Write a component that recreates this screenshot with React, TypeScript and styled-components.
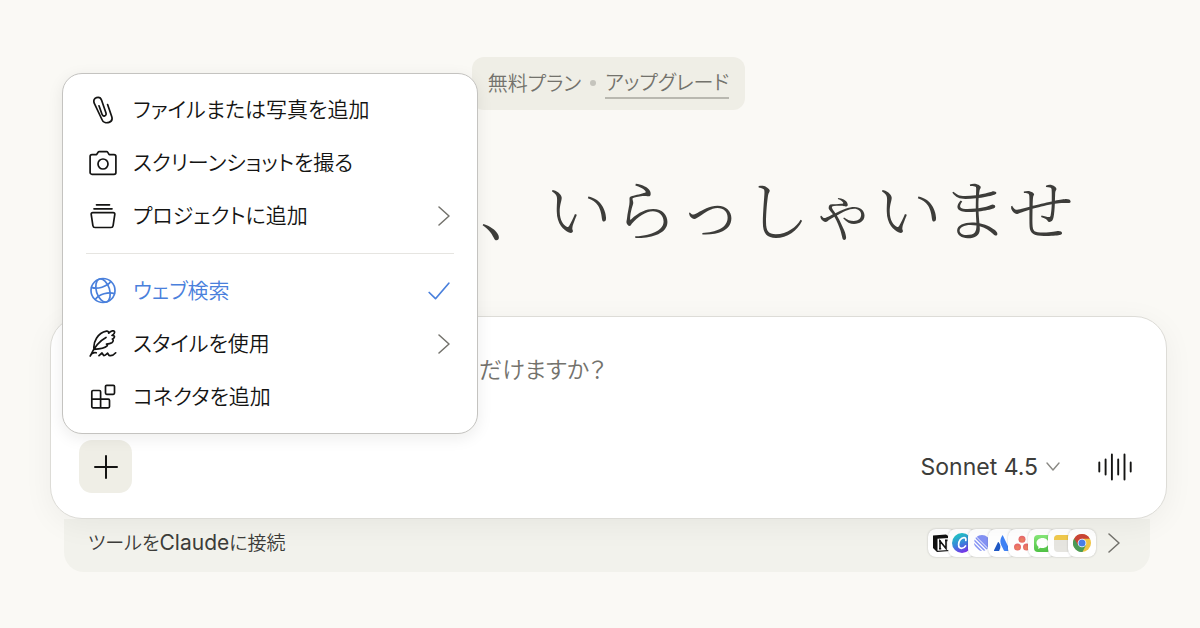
import React from "react";
import styled, { createGlobalStyle } from "styled-components";

const GlobalStyle = createGlobalStyle`
  *, *::before, *::after { box-sizing: border-box; }
  body {
    margin: 0;
    background: #faf9f5;
    color: #141413;
    font-family: "Noto Sans CJK JP", sans-serif;
    font-weight: 350;
    font-feature-settings: "palt";
  }
  button, textarea { font: inherit; font-feature-settings: inherit; color: inherit; }
`;

const Page = styled.main`
  position: relative;
  padding: 57px 33px 56px 50px;
`;

const PlanBadge = styled.div`
  display: flex;
  align-items: center;
  gap: 9px;
  width: fit-content;
  height: 53px;
  margin: 0 auto;
  padding: 0 16px 2px;
  border-radius: 12px;
  background: #efeee6;
  color: #73726c;
  font-size: 20px;
  line-height: 30px;
`;

const Dot = styled.span`
  width: 6px;
  height: 6px;
  border-radius: 50%;
  background: #c5c4bd;
`;

const UpgradeLink = styled.a`
  color: inherit;
  text-decoration: none;
  border-bottom: 2px solid #b9b8b0;
`;

const Greeting = styled.h1`
  margin: 53px 93px 0 0;
  color: #3d3d3a;
  font-family: "Noto Serif CJK JP", "Noto Sans CJK JP", serif;
  font-size: 66px;
  font-weight: 300;
  font-feature-settings: normal;
  line-height: 88px;
  text-align: right;
`;

const Composer = styled.form`
  position: relative;
  display: flex;
  flex-direction: column;
  justify-content: space-between;
  min-height: 203px;
  margin-top: 65px;
  padding: 32px 28px 25px;
  border: 1px solid #dddcd7;
  border-radius: 32px;
  background: #fff;
  box-shadow: 0 6px 30px rgba(20, 20, 19, 0.05);
`;

const Prompt = styled.textarea`
  display: block;
  width: 100%;
  height: 40px;
  padding: 0 0 0 400px;
  border: 0;
  outline: 0;
  resize: none;
  overflow: hidden;
  background: transparent;
  font-size: 23px;
  line-height: 38px;
  &::placeholder { color: #73726c; opacity: 1; }
`;

const Controls = styled.div`
  display: flex;
  align-items: center;
`;

const AddButton = styled.button`
  display: grid;
  place-items: center;
  width: 53px;
  height: 53px;
  margin-right: auto;
  padding: 0;
  border: 0;
  border-radius: 13px;
  background: #efeee6;
`;

const ModelButton = styled.button`
  display: flex;
  align-items: center;
  gap: 8px;
  padding: 0;
  border: 0;
  background: none;
  color: #3d3d3a;
  font-family: Inter, sans-serif;
  font-size: 23px;
  font-weight: 400;
  line-height: 32px;
`;

const VoiceButton = styled.button`
  display: grid;
  margin: 0 6px 0 38px;
  padding: 0;
  border: 0;
  background: none;
`;

const ConnectBar = styled.a`
  display: flex;
  align-items: center;
  justify-content: space-between;
  height: 53px;
  margin: 0 17px 0 14px;
  padding: 0 30px 5px 24px;
  border-radius: 0 0 20px 20px;
  background: #f2f2ec;
  color: #3d3d3a;
  font-size: 19px;
  line-height: 32px;
  text-decoration: none;
`;

const BarText = styled.span`
  padding-bottom: 2px;
`;

const Latin = styled.span`
  font-family: Inter, sans-serif;
  font-size: 21px;
  font-weight: 400;
`;

const Apps = styled.span`
  display: flex;
  align-items: center;
`;

const AppTile = styled.span`
  display: grid;
  place-items: center;
  width: 28px;
  height: 28px;
  border-radius: 8px;
  background: #fff;
  box-shadow: 0 0 2px rgba(20, 20, 19, 0.25);
  & + & { margin-left: -8px; }
`;

const NextIcon = styled.span`
  display: grid;
  margin-left: 12px;
`;

const Menu = styled.div`
  position: absolute;
  z-index: 2;
  top: 73px;
  left: 62px;
  width: 416px;
  padding: 9px 23px 10px;
  border: 1px solid #c4c3c0;
  border-radius: 20px;
  background: #fff;
  box-shadow: 0 4px 16px rgba(20, 20, 19, 0.08);
`;

const MenuItem = styled.button<{ $active?: boolean }>`
  display: flex;
  align-items: center;
  gap: 16px;
  width: 100%;
  height: 53px;
  padding: 0 4px 0 3px;
  border: 0;
  background: none;
  color: ${(p) => (p.$active ? "#4a80dc" : "#141413")};
  font-size: 21px;
  line-height: 32px;
  text-align: left;
`;

const Label = styled.span`
  flex: 1;
  padding-bottom: 4px;
`;

const Divider = styled.hr`
  height: 1px;
  margin: 11px 0 10px;
  border: 0;
  background: #e6e5e1;
`;

const Glyph = ({ children, w = 28, h = 28, sw = 1.7, color = "currentColor" }: {
  children: React.ReactNode; w?: number; h?: number; sw?: number; color?: string;
}) => (
  <svg width={w} height={h} viewBox={`0 0 ${w} ${h}`} fill="none" stroke={color} strokeWidth={sw}
    strokeLinecap="round" strokeLinejoin="round" aria-hidden="true">{children}</svg>
);

const Chevron = () => (
  <Glyph w={12} h={20} sw={1.5} color="#73726c"><path d="M1 1l10 9-10 9" /></Glyph>
);

const Clip = () => (
  <Glyph><path d="M18.6 8.6l4.1 12c.9 2.700-.3 5-2.700 5.800-3 1-6.200-.2-7.300-3.400L5.200 7.200C4.300 4.600 5.200 2.300 7.500 1.600c2.200-.7 4.300.3 5.100 2.600l4.300 12.600c.5 1.500 0 2.700-1.200 3.100-1.200.4-2.200-.2-2.700-1.600L10 9.800" /></Glyph>
);

const Camera = () => (
  <Glyph>
    <path d="M3 5.600h4.600l1.700-2.500c.2-.3.400-.4.800-.4h7.600c.4 0 .7.100.9.400l1.600 2.500H25c1.100 0 1.900.8 1.900 1.900v15.900c0 1.100-.8 1.900-1.900 1.900H3c-1.100 0-1.900-.8-1.900-1.900V7.500c0-1.100.8-1.900 1.900-1.900z" />
    <circle cx="14" cy="15" r="5" />
  </Glyph>
);

const Project = () => (
  <Glyph><path d="M7.500 2.800h13M5 6.800h18M3.700 10.700h20.600c1 0 1.600.7 1.500 1.600l-1.700 11.300c-.2 1.200-1 1.900-2.100 1.900H6c-1.100 0-1.900-.7-2.100-1.900L2.200 12.300c-.1-.9.500-1.600 1.500-1.600z" /></Glyph>
);

const Globe = () => (
  <Glyph>
    <circle cx="14" cy="13.500" r="12" />
    <g transform="rotate(-17 14 13.500)">
      <ellipse cx="14" cy="13.500" rx="6.600" ry="12" />
      <path d="M4 7.200c4.800 3.800 15.200 3.800 20 0M4 19.800c4.800-3.800 15.200-3.800 20 0" />
    </g>
  </Glyph>
);

const Feather = () => (
  <Glyph>
    <path d="M1.200 26C5 17.500 9.500 11.500 17 7.500M5 19.300C4 12 8.500 3 17.500 1.200c1.500-.3 2.300.8 2.200 2C21.500 1 25.600-.3 25.600 2.200c0 1.500-1.300 2.500-2.600 3.200 2.400-.2 3 1.200 1.900 2.500-.6.800-1.500 1.200-1.500 1.200 1.300.8.900 2.600-.6 3.600-1.600 1-3.800 1.300-5.300 1.400 1 .2 1.200 1.200.3 2.100-2.200 2.300-7.800 2.900-12.800 3.100M1.200 26c.9-2.300 3.500-3.900 6-3.200M10 25.600l3-2.600 1.700 2.500c1.300.3 2.600-1.100 3.900-2.400l1.500 2.400c2.300.7 4.800-.6 6.600-2.700" />
  </Glyph>
);

const Blocks = () => (
  <Glyph>
    <rect x="16.500" y="2.300" width="9" height="9" rx="1.200" />
    <path d="M4 7.500h6.400c.7 0 1.200.5 1.200 1.200v16.100H4c-.7 0-1.200-.5-1.200-1.200V8.700c0-.7.500-1.200 1.200-1.200zM2.800 16.200h16.500c.7 0 1.200.5 1.200 1.200v6.200c0 .7-.5 1.200-1.200 1.200h-8" />
  </Glyph>
);

const Notion = () => (
  <svg width="20" height="20" viewBox="0 0 20 20" aria-hidden="true">
    <path d="M1 2.500L14 1.500l4 2.700V18L5 19 1 15z" fill="#111" />
    <path d="M5.500 5.800l11.300-.8v12l-11.300.8z" fill="#fff" />
    <path d="M8 15.700V8l6 7.500V7.500M7 8h2M13 7.400h2.500M7 15.700h2.200" fill="none" stroke="#111" strokeWidth="1.600" />
  </svg>
);

const Canva = () => (
  <svg width="20" height="20" viewBox="0 0 20 20" aria-hidden="true">
    <defs><linearGradient id="canva" x1="0.200" y1="0" x2="0.600" y2="1">
      <stop offset="0.150" stopColor="#24bcc8" /><stop offset="0.550" stopColor="#3b82dc" /><stop offset="1" stopColor="#7a2ee8" />
    </linearGradient></defs>
    <circle cx="10" cy="10" r="10" fill="url(#canva)" />
    <path d="M13.800 7.500c.4-1.700-.2-2.900-1.800-2.900-3 0-5.400 3.700-5.400 7 0 2.300 1.100 3.800 3 3.800 1.700 0 3.100-1 4-2.500" fill="none" stroke="#fff" strokeWidth="1.700" strokeLinecap="round" />
  </svg>
);

const Linear = () => (
  <svg width="16" height="16" viewBox="0 0 16 16" aria-hidden="true">
    <defs><clipPath id="disc"><circle cx="8" cy="8" r="8" /></clipPath></defs>
    <g clipPath="url(#disc)">
      <path d="M2 0h14v14z" fill="#8492f4" />
      <path d="M0 1l15 15M-1 4l13 13M-2 7l11 11M1-1l15 15" stroke="#8492f4" strokeWidth="1.500" />
    </g>
  </svg>
);

const Atlassian = () => (
  <svg width="16" height="16" viewBox="0 0 16 16" aria-hidden="true">
    <path d="M4.600 7.200c1.800 1.900 2.400 4.700 1.100 7.400L5.100 16H.4c-.4 0-.5-.3-.4-.7L3.900 7.300c.2-.3.500-.3.700-.1z" fill="#1f58c4" />
    <path d="M8.300.4C6 4 5.800 7.300 7.500 10.700l2.400 4.900c.1.300.4.400.7.400h4.900c.4 0 .6-.3.400-.7L8.900.4c-.1-.3-.4-.3-.6 0z" fill="#3f82f5" />
  </svg>
);

const Asana = () => (
  <svg width="16" height="16" viewBox="0 0 16 16" aria-hidden="true">
    <defs><radialGradient id="asana" cx="0.500" cy="0.600" r="0.600">
      <stop offset="0" stopColor="#ef8560" /><stop offset="1" stopColor="#e5646d" />
    </radialGradient></defs>
    <circle cx="8" cy="4.200" r="3.500" fill="url(#asana)" />
    <circle cx="3.500" cy="12" r="3.500" fill="url(#asana)" />
    <circle cx="12.500" cy="12" r="3.500" fill="url(#asana)" />
  </svg>
);

const Messages = () => (
  <svg width="17" height="17" viewBox="0 0 17 17" aria-hidden="true">
    <defs><linearGradient id="msg" x1="0" y1="0" x2="0" y2="1">
      <stop offset="0" stopColor="#86e878" /><stop offset="1" stopColor="#4fc144" />
    </linearGradient></defs>
    <rect width="17" height="17" rx="4" fill="url(#msg)" />
    <path d="M8.500 3c3.500 0 6 2.200 6 5s-2.500 5-6 5c-.8 0-1.500-.1-2.100-.3-.8.700-1.800 1-2.600 1 .5-.5.800-1.200.7-2C3.200 10.800 2.500 9.500 2.500 8c0-2.800 2.500-5 6-5z" fill="#fff" />
  </svg>
);

const Notes = () => (
  <svg width="17" height="17" viewBox="0 0 17 17" aria-hidden="true">
    <rect width="17" height="17" rx="4" fill="#e6e5e0" />
    <path d="M0 5V4a4 4 0 014-4h9a4 4 0 014 4v1z" fill="#f0c94c" />
  </svg>
);

const Chrome = () => (
  <svg width="18" height="18" viewBox="0 0 18 18" aria-hidden="true">
    <circle cx="9" cy="9" r="9" fill="#f0c544" />
    <path d="M9 9L1.200 4.500A9 9 0 009.500 18l3.400-6.700z" fill="#4b9b57" />
    <path d="M9 9L5.100 11.200 1.200 4.500A9 9 0 0116.800 4.700H9z" fill="#ca4436" />
    <circle cx="9" cy="9" r="4.300" fill="#fff" />
    <circle cx="9" cy="9" r="3.500" fill="#4a7fe8" />
  </svg>
);

const apps = [Notion, Canva, Linear, Atlassian, Asana, Messages, Notes, Chrome];

const groups = [
  [
    { label: "ファイルまたは写真を追加", Icon: Clip },
    { label: "スクリーンショットを撮る", Icon: Camera },
    { label: "プロジェクトに追加", Icon: Project, more: true },
  ],
  [
    { label: "ウェブ検索", Icon: Globe, active: true },
    { label: "スタイルを使用", Icon: Feather, more: true },
    { label: "コネクタを追加", Icon: Blocks },
  ],
] as { label: string; Icon: React.FC; more?: boolean; active?: boolean }[][];

export default function App() {
  return (
    <>
      <GlobalStyle />
      <Page>
        <PlanBadge>
          <span>無料プラン</span>
          <Dot />
          <UpgradeLink href="#">アップグレード</UpgradeLink>
        </PlanBadge>
        <Greeting>、いらっしゃいませ</Greeting>
        <Menu role="menu">
          {groups.map((items, i) => (
            <React.Fragment key={i}>
              {i > 0 && <Divider />}
              {items.map(({ label, Icon, more, active }) => (
                <MenuItem key={label} type="button" role="menuitem" $active={active}>
                  <Icon />
                  <Label>{label}</Label>
                  {more && <Chevron />}
                  {active && <Glyph w={22} h={18} sw={1.7}><path d="M1.200 10.500l6.300 6.200L20.800 1.200" /></Glyph>}
                </MenuItem>
              ))}
            </React.Fragment>
          ))}
        </Menu>
        <Composer onSubmit={(e) => e.preventDefault()}>
          <Prompt aria-label="メッセージ" placeholder="だけますか？" />
          <Controls>
            <AddButton type="button" aria-label="追加">
              <Glyph w={24} h={24} sw={2}><path d="M12 1v22M1 12h22" /></Glyph>
            </AddButton>
            <ModelButton type="button">
              Sonnet 4.5
              <Glyph w={14} h={10} sw={1.400} color="#8a8984"><path d="M1 1l6 7 6-7" /></Glyph>
            </ModelButton>
            <VoiceButton type="button" aria-label="音声">
              <Glyph w={34} h={28} sw={1.900}><path d="M1.300 9.500v9M7.600 6.500v15M13.900 1.500v25M20.200 6.500v15M26.500 1.500v25M32.700 9.500v9" /></Glyph>
            </VoiceButton>
          </Controls>
        </Composer>
        <ConnectBar href="#">
          <BarText>ツールを<Latin>Claude</Latin>に接続</BarText>
          <Apps>
            {apps.map((Logo, i) => <AppTile key={i}><Logo /></AppTile>)}
            <NextIcon><Chevron /></NextIcon>
          </Apps>
        </ConnectBar>
      </Page>
    </>
  );
}
